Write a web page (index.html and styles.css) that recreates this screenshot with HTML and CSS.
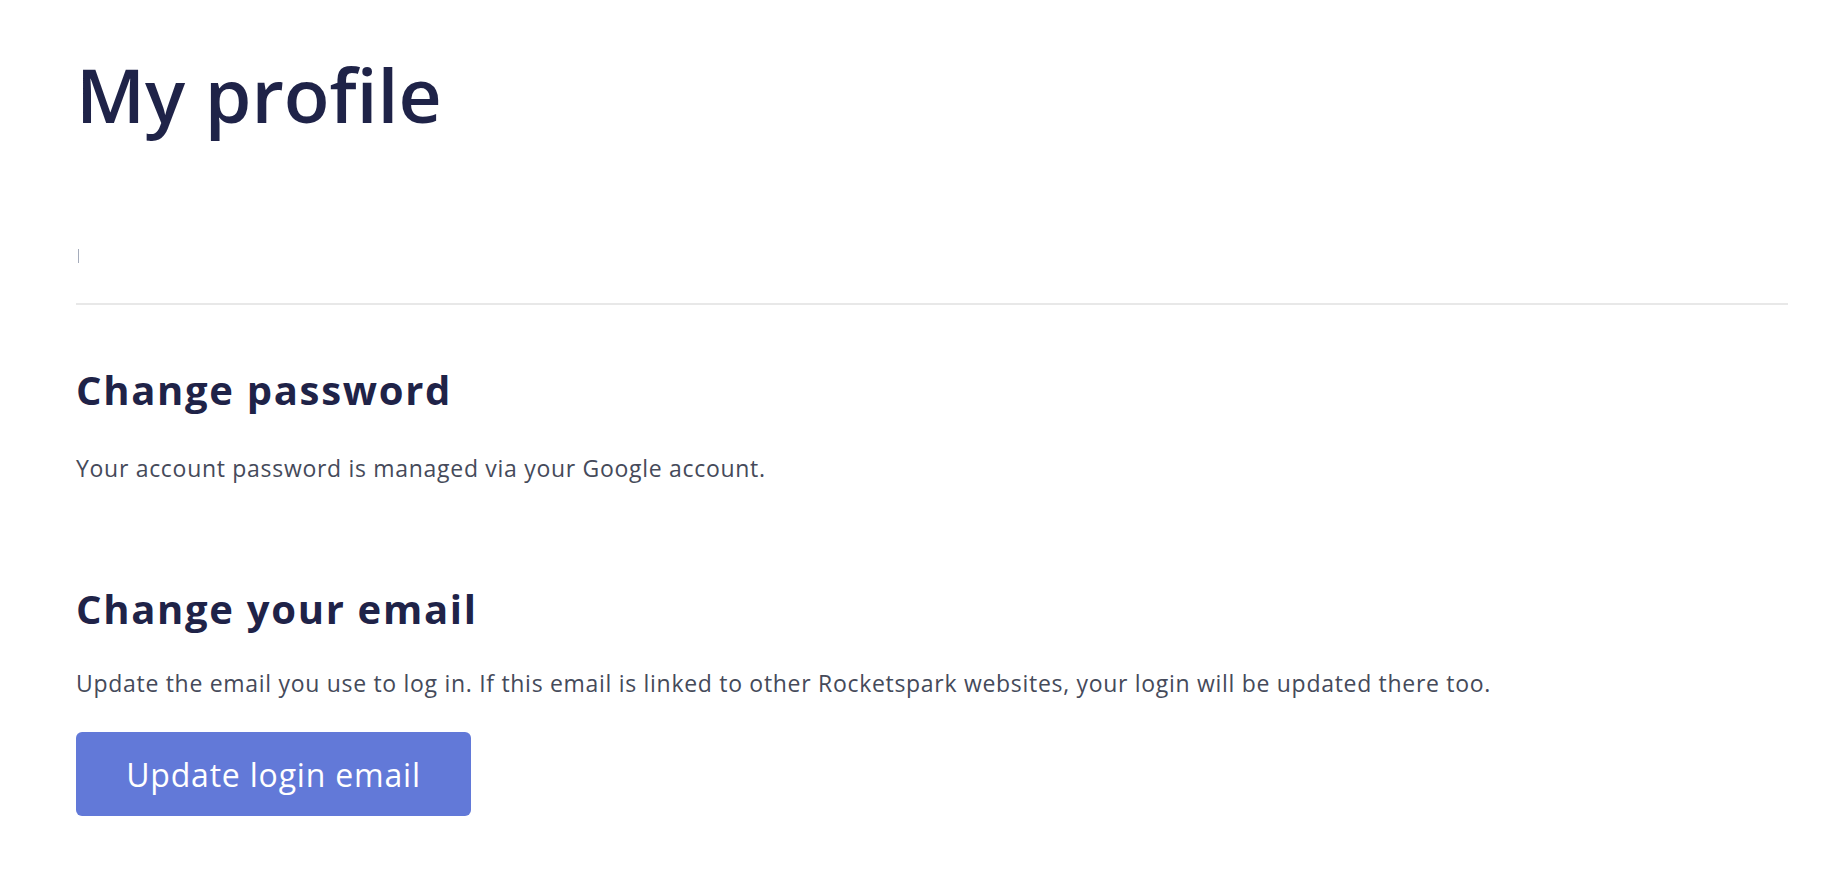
FILE: index.html
```html
<!DOCTYPE html>
<html lang="en">
<head>
<meta charset="utf-8">
<title>My profile</title>
<link rel="stylesheet" href="styles.css">
</head>
<body>
<main class="page">
  <h1 class="page-title">My profile</h1>
  <div class="tabs"><span class="tab-sep"></span></div>
  <section class="section section-password">
    <h2 class="section-title">Change password</h2>
    <p class="section-text">Your account password is managed via your Google account.</p>
  </section>
  <section class="section section-email">
    <h2 class="section-title">Change your email</h2>
    <p class="section-text">Update the email you use to log in. If this email is linked to other Rocketspark websites, your login will be updated there too.</p>
    <button class="btn-primary" type="button">Update login email</button>
  </section>
</main>
</body>
</html>
```
FILE: styles.css
```css
html, body {
  margin: 0;
  padding: 0;
  background: #ffffff;
}
body {
  font-family: "Open Sans", Lato, sans-serif;
  color: #1f2348;
}
.page {
  padding: 0 54px 0 76px;
}
.page-title {
  margin: 49px 0 0;
  font-size: 75px;
  line-height: 90px;
  font-weight: 600;
  color: #1f2348;
}
.tabs {
  border-bottom: 2px solid #e8e8e8;
  padding-top: 110px;
  box-sizing: border-box;
  height: 166px;
}
.tab-sep {
  display: block;
  width: 1px;
  height: 14px;
  margin-left: 2px;
  background: #a5acbb;
}
.section-title {
  margin: 0;
  font-size: 40px;
  line-height: 46px;
  font-weight: 700;
  letter-spacing: 1.7px;
  color: #1f2348;
}
.section-password {
  padding-top: 62px;
}
.section-text {
  margin: 0;
  font-size: 23px;
  line-height: 30px;
  letter-spacing: 0.7px;
  color: #454a5a;
}
.section-password .section-text {
  margin-top: 40px;
}
.section-email {
  padding-top: 103px;
}
.section-email .section-text {
  margin-top: 36px;
}
.btn-primary {
  display: block;
  margin-top: 34px;
  width: 395px;
  height: 84px;
  border: 0;
  border-radius: 6px;
  background: #6279d8;
  color: #ffffff;
  font-family: "Open Sans", Lato, sans-serif;
  font-size: 32px;
  font-weight: 500;
  letter-spacing: 0.8px;
  cursor: pointer;
}
```
